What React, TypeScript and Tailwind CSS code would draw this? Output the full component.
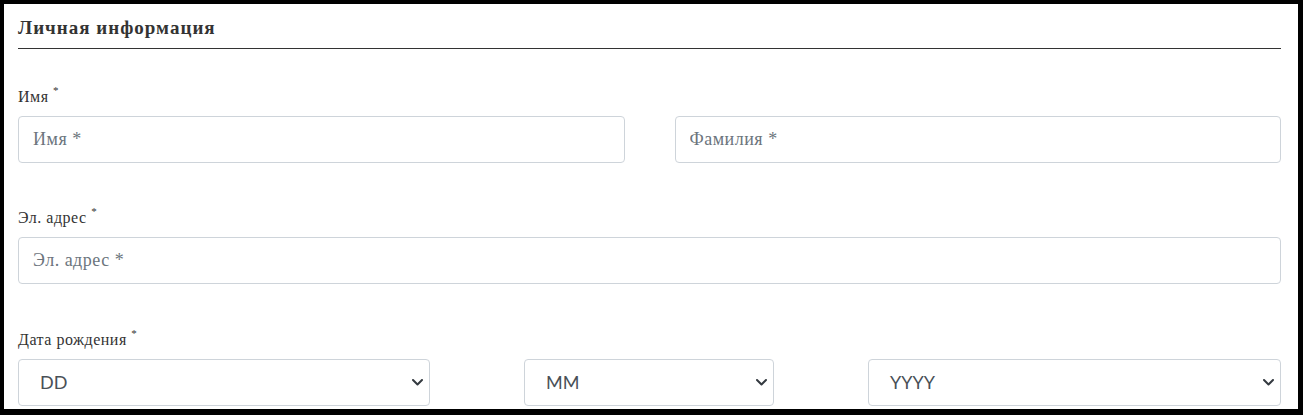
const serifCls = "font-['Liberation_Serif','Times_New_Roman',serif]"

function Label({ text }: { text: string }) {
  return (
    <label className={`block text-[16px] leading-[20px] tracking-[0.5px] text-[#333] mb-[9px] ${serifCls}`}>
      {text} <sup className="text-[11px] align-[3px]">*</sup>
    </label>
  )
}

function TextField({ placeholder }: { placeholder: string }) {
  return (
    <input
      type="text"
      placeholder={placeholder}
      className={`block w-full h-[47px] px-[14px] border border-[#ced4da] rounded-[4px] text-[18px] tracking-[0.5px] text-[#495057] placeholder:text-[#6c757d] outline-none bg-white ${serifCls}`}
    />
  )
}

function Chevron() {
  return (
    <svg width="11" height="7" viewBox="0 0 11 7" className="text-[#343a40]">
      <polyline points="1,1 5.5,5.5 10,1" fill="none" stroke="currentColor" strokeWidth="2" strokeLinecap="round" strokeLinejoin="round" />
    </svg>
  )
}

function SelectBox({ value, width }: { value: string; width: string }) {
  return (
    <div
      className={`${width} h-[47px] flex items-center justify-between pl-[21px] pr-[6px] border border-[#ced4da] rounded-[4px] bg-white`}
    >
      <span className="text-[18px] text-[#495057] font-['Lato','Liberation_Sans',sans-serif]">{value}</span>
      <Chevron />
    </div>
  )
}

export default function App() {
  return (
    <div className="w-[1303px] h-[415px] bg-black pt-[4px] pl-[4px] pr-[5px] pb-[6px]">
      <div className="h-full bg-white overflow-hidden pl-[14px] pr-[17px]">
        <div className="pt-[12px] pb-[8px] border-b border-[#333]">
          <h2 className={`text-[19px] leading-[24px] font-bold tracking-[1px] text-[#333] ${serifCls}`}>
            Личная информация
          </h2>
        </div>

        <div className="mt-[38px]">
          <Label text="Имя" />
          <div className="grid grid-cols-2 gap-x-[50px]">
            <TextField placeholder="Имя *" />
            <TextField placeholder="Фамилия *" />
          </div>
        </div>

        <div className="mt-[45px]">
          <Label text="Эл. адрес" />
          <TextField placeholder="Эл. адрес *" />
        </div>

        <div className="mt-[46px]">
          <Label text="Дата рождения" />
          <div className="flex justify-between">
            <SelectBox value="DD" width="w-[412px]" />
            <SelectBox value="MM" width="w-[250px]" />
            <SelectBox value="YYYY" width="w-[413px]" />
          </div>
        </div>
      </div>
    </div>
  )
}
